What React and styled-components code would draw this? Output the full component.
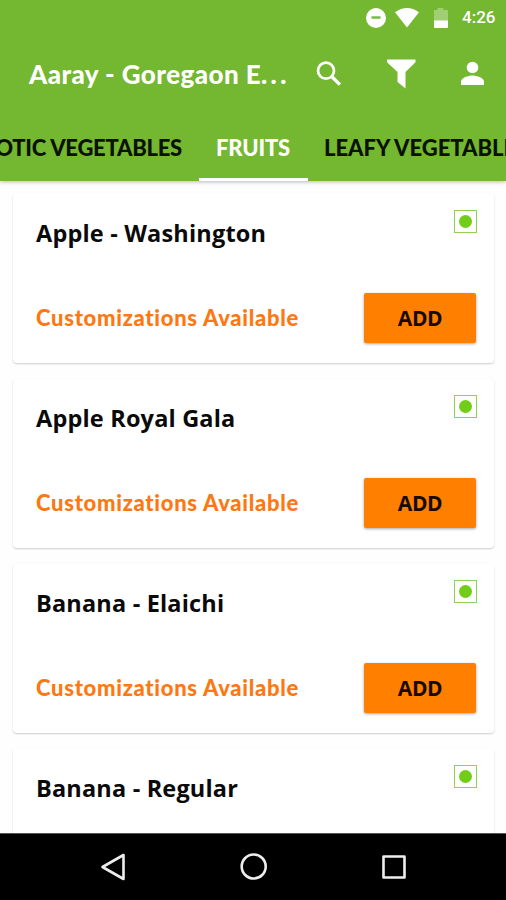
import React from 'react';
import styled, { createGlobalStyle } from 'styled-components';

const GlobalStyle = createGlobalStyle`
  * {
    box-sizing: border-box;
  }

  body {
    margin: 0;
    background: #fff;
  }
`;

const Screen = styled.div`
  display: flex;
  flex-direction: column;
  width: 506px;
  height: 900px;
  overflow: hidden;
  background: #fefefe;
  font-family: Lato, "Open Sans", sans-serif;
`;

const Header = styled.header`
  flex: none;
  height: 181px;
  background: #74b730;
  box-shadow: 0 1px 4px rgba(0, 0, 0, 0.28);
  color: #fff;
  z-index: 1;
`;

const StatusBar = styled.div`
  display: flex;
  align-items: center;
  justify-content: flex-end;
  height: 35px;
  padding-right: 11px;
`;

const StatusIcon = styled.svg`
  display: block;
  width: ${(props) => props.$width}px;
  height: 22px;
  margin-right: ${(props) => props.$gap}px;
`;

const Clock = styled.span`
  width: 33px;
  font: 500 17px/35px Roboto, sans-serif;
  white-space: nowrap;
`;

const Toolbar = styled.div`
  display: flex;
  align-items: center;
  height: 77px;
  padding: 0 19px 0 29px;
`;

const Title = styled.h1`
  width: 286px;
  margin: 0;
  font-size: 26px;
  font-weight: 900;
  line-height: 76px;
  letter-spacing: 0.42px;
  white-space: nowrap;
`;

const Ellipsis = styled.span`
  letter-spacing: 3.4px;
`;

const ToolbarIcon = styled.svg`
  display: block;
  flex: none;
  width: ${(props) => props.$width}px;
  height: 30px;
  margin-right: ${(props) => props.$gap || 0}px;
`;

const Tabs = styled.nav`
  display: grid;
  grid-template-columns: 199px 109px 198px;
  height: 69px;
`;

const Tab = styled.div`
  display: flex;
  justify-content: ${(props) => props.$align};
  height: 69px;
  padding: 0 17px 0 16px;
  overflow: hidden;
  border-bottom: 3px solid ${(props) => (props.$active ? '#fff' : 'transparent')};
  color: ${(props) => (props.$active ? '#fff' : '#0b1203')};
  font-size: 22px;
  font-weight: 900;
  line-height: 71px;
  letter-spacing: ${(props) => props.$spacing}px;
  white-space: nowrap;
`;

const TabLabel = styled.span`
  flex: none;
`;

const ProductList = styled.main`
  flex: 1;
  min-height: 0;
  padding: 13px 12px 0 13px;
  overflow: hidden;
`;

const Card = styled.article`
  display: flex;
  flex-direction: column;
  justify-content: space-between;
  height: 169px;
  margin-bottom: 16px;
  padding: 16px 17px 20px 23px;
  border-radius: 4px;
  background: #fff;
  box-shadow: 0 1px 2px rgba(0, 0, 0, 0.2);
`;

const CardRow = styled.div`
  display: flex;
  align-items: ${(props) => props.$align};
  justify-content: space-between;
`;

const ProductName = styled.h2`
  margin: 3px 0 0;
  color: #0a0a0a;
  font: 700 23.5px/40px "Open Sans", sans-serif;
  letter-spacing: 0.18px;
  white-space: nowrap;
`;

const VegMark = styled.span`
  display: flex;
  align-items: center;
  justify-content: center;
  width: 23px;
  height: 23px;
  border: 1px solid #8fd156;

  &::before {
    content: "";
    width: 13px;
    height: 13px;
    border-radius: 50%;
    background: #72cd18;
  }
`;

const Customizations = styled.span`
  margin-top: -2px;
  color: #fd7812;
  font-size: 22px;
  font-weight: 900;
  letter-spacing: 0.7px;
  white-space: nowrap;
`;

const AddButton = styled.button`
  width: 112px;
  height: 50px;
  margin-right: 1px;
  padding: 0;
  border: 0;
  border-radius: 2px;
  background: #ff7f00;
  box-shadow: 0 1px 3px rgba(0, 0, 0, 0.35);
  color: #160b00;
  font: 700 21px/50px "Open Sans", sans-serif;
  letter-spacing: -0.4px;
`;

const NavBar = styled.footer`
  flex: none;
  display: flex;
  align-items: center;
  justify-content: space-between;
  height: 67px;
  padding: 0 98px 0 99px;
  border-top: 1px solid #555;
  background: #000;
`;

const NavIcon = styled.svg`
  display: block;
  width: 28px;
  height: 28px;
  fill: none;
  stroke: #eee;
  stroke-width: 2.6;
  stroke-linejoin: round;
`;

const products = [
  'Apple - Washington',
  'Apple Royal Gala',
  'Banana - Elaichi',
  'Banana - Regular',
];

function ProductCard({ name }) {
  return (
    <Card>
      <CardRow $align="flex-start">
        <ProductName>{name}</ProductName>
        <VegMark />
      </CardRow>
      <CardRow $align="center">
        <Customizations>Customizations Available</Customizations>
        <AddButton type="button">ADD</AddButton>
      </CardRow>
    </Card>
  );
}

function App() {
  return (
    <Screen>
      <GlobalStyle />
      <Header>
        <StatusBar>
          <StatusIcon $width={22} $gap={9} viewBox="0 0 22 22">
            <circle cx="12" cy="11" r="10" fill="#fff" />
            <path d="M7.5 10.5h9" stroke="#74b730" strokeWidth="2.4" />
          </StatusIcon>
          <StatusIcon $width={24} $gap={14} viewBox="0 0 24 22">
            <path d="M0 5.3Q12-3.3 24 5.3L12 20.5z" fill="#fff" />
          </StatusIcon>
          <StatusIcon $width={16} $gap={13} viewBox="0 0 16 22">
            <path d="M1 3h3.5V1h6v2H15v11H1z" fill="#fff" opacity="0.32" />
            <path d="M1 13.5h14V20q0 1-1 1H2q-1 0-1-1z" fill="#fff" />
          </StatusIcon>
          <Clock>4:26</Clock>
        </StatusBar>
        <Toolbar>
          <Title>
            Aaray - Goregaon E<Ellipsis>...</Ellipsis>
          </Title>
          <ToolbarIcon $width={28} $gap={44} viewBox="0 0 28 30">
            <circle cx="11" cy="11.7" r="8" fill="none" stroke="#fff" strokeWidth="2.7" />
            <path d="M16.7 17.5l8.2 8.2" stroke="#fff" strokeWidth="3.3" />
          </ToolbarIcon>
          <ToolbarIcon $width={30} $gap={43} viewBox="0 0 30 30">
            <path d="M0 .5h28.5v2.8L18.5 13V29.5L10.5 23V13L0 3.3z" fill="#fff" />
          </ToolbarIcon>
          <ToolbarIcon $width={26} viewBox="0 0 26 30">
            <circle cx="12.5" cy="8.5" r="5.8" fill="#fff" />
            <path d="M1 26v-3.2c0-4.2 7.5-6.3 11.5-6.3S24 18.6 24 22.8V26z" fill="#fff" />
          </ToolbarIcon>
        </Toolbar>
        <Tabs>
          <Tab $align="flex-end" $spacing={-0.25}>
            <TabLabel>EXOTIC VEGETABLES</TabLabel>
          </Tab>
          <Tab $align="center" $spacing={-0.2} $active>
            <TabLabel>FRUITS</TabLabel>
          </Tab>
          <Tab $align="flex-start" $spacing={0}>
            <TabLabel>LEAFY VEGETABLES</TabLabel>
          </Tab>
        </Tabs>
      </Header>
      <ProductList>
        {products.map((name) => (
          <ProductCard key={name} name={name} />
        ))}
      </ProductList>
      <NavBar>
        <NavIcon viewBox="0 0 28 28">
          <path d="M3.5 14L24.5 2v24z" />
        </NavIcon>
        <NavIcon viewBox="0 0 28 28">
          <circle cx="13.7" cy="13.5" r="12" />
        </NavIcon>
        <NavIcon viewBox="0 0 28 28">
          <path d="M3.5 3.5h21v21h-21z" />
        </NavIcon>
      </NavBar>
    </Screen>
  );
}

export default App;
